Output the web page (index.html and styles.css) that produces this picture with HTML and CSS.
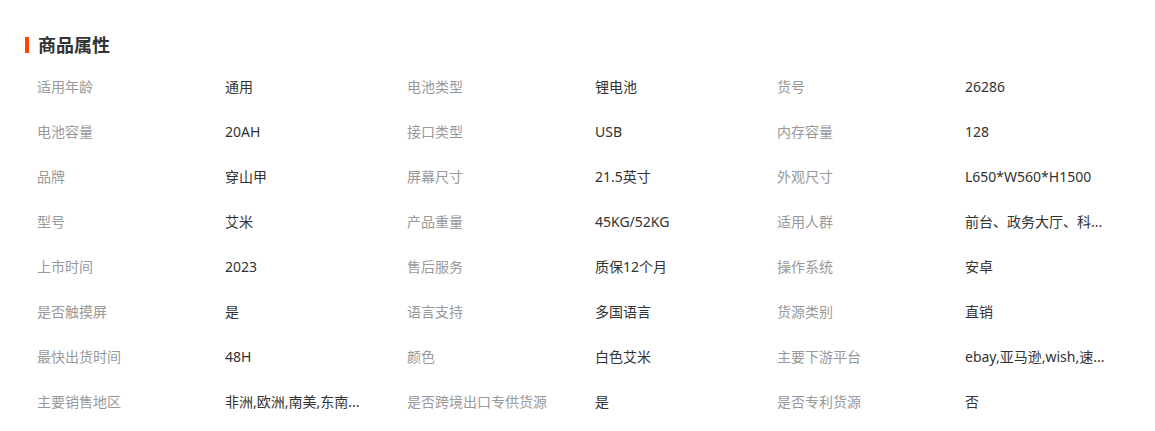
FILE: index.html
```html
<!DOCTYPE html>
<html lang="zh-CN">
<head>
    <meta charset="UTF-8">
    <title>商品属性</title>
    <link rel="stylesheet" href="styles.css">
</head>
<body>

<div class="attrs">
    <h2 class="attrs-title">商品属性</h2>
    <div class="attrs-grid">
        <div class="attr"><span class="attr-label">适用年龄</span><span class="attr-value">通用</span></div>
        <div class="attr"><span class="attr-label">电池类型</span><span class="attr-value">锂电池</span></div>
        <div class="attr"><span class="attr-label">货号</span><span class="attr-value">26286</span></div>

        <div class="attr"><span class="attr-label">电池容量</span><span class="attr-value">20AH</span></div>
        <div class="attr"><span class="attr-label">接口类型</span><span class="attr-value">USB</span></div>
        <div class="attr"><span class="attr-label">内存容量</span><span class="attr-value">128</span></div>

        <div class="attr"><span class="attr-label">品牌</span><span class="attr-value">穿山甲</span></div>
        <div class="attr"><span class="attr-label">屏幕尺寸</span><span class="attr-value">21.5英寸</span></div>
        <div class="attr"><span class="attr-label">外观尺寸</span><span class="attr-value">L650*W560*H1500</span></div>

        <div class="attr"><span class="attr-label">型号</span><span class="attr-value">艾米</span></div>
        <div class="attr"><span class="attr-label">产品重量</span><span class="attr-value">45KG/52KG</span></div>
        <div class="attr"><span class="attr-label">适用人群</span><span class="attr-value">前台、政务大厅、科...</span></div>

        <div class="attr"><span class="attr-label">上市时间</span><span class="attr-value">2023</span></div>
        <div class="attr"><span class="attr-label">售后服务</span><span class="attr-value">质保12个月</span></div>
        <div class="attr"><span class="attr-label">操作系统</span><span class="attr-value">安卓</span></div>

        <div class="attr"><span class="attr-label">是否触摸屏</span><span class="attr-value">是</span></div>
        <div class="attr"><span class="attr-label">语言支持</span><span class="attr-value">多国语言</span></div>
        <div class="attr"><span class="attr-label">货源类别</span><span class="attr-value">直销</span></div>

        <div class="attr"><span class="attr-label">最快出货时间</span><span class="attr-value">48H</span></div>
        <div class="attr"><span class="attr-label">颜色</span><span class="attr-value">白色艾米</span></div>
        <div class="attr"><span class="attr-label">主要下游平台</span><span class="attr-value">ebay,亚马逊,wish,速...</span></div>

        <div class="attr"><span class="attr-label">主要销售地区</span><span class="attr-value">非洲,欧洲,南美,东南...</span></div>
        <div class="attr"><span class="attr-label">是否跨境出口专供货源</span><span class="attr-value">是</span></div>
        <div class="attr"><span class="attr-label">是否专利货源</span><span class="attr-value">否</span></div>
    </div>
</div>

</body>
</html>
```

FILE: styles.css
```css
body {
    margin: 0;
    background: #fff;
    color: #333;
    font-family: "Noto Sans", "Noto Sans CJK SC", sans-serif;
    font-size: 14px;
}
.attrs {
    padding: 33px 0 0 25px;
}
.attrs-title {
    margin: 0;
    height: 24px;
    line-height: 24px;
    font-size: 18px;
    font-weight: bold;
    color: #333;
    display: flex;
    align-items: center;
    gap: 9px;
}
.attrs-title::before {
    content: "";
    width: 4px;
    height: 16px;
    background: #ff4400;
}
.attrs-grid {
    margin: 7px 0 0 12px;
    display: grid;
    grid-template-columns: repeat(3, 370px);
}
.attr {
    display: flex;
    height: 45px;
    line-height: 45px;
}
.attr-label {
    width: 188px;
    flex: none;
    color: #999;
    white-space: nowrap;
}
.attr-value {
    white-space: nowrap;
    color: #333;
}
```
